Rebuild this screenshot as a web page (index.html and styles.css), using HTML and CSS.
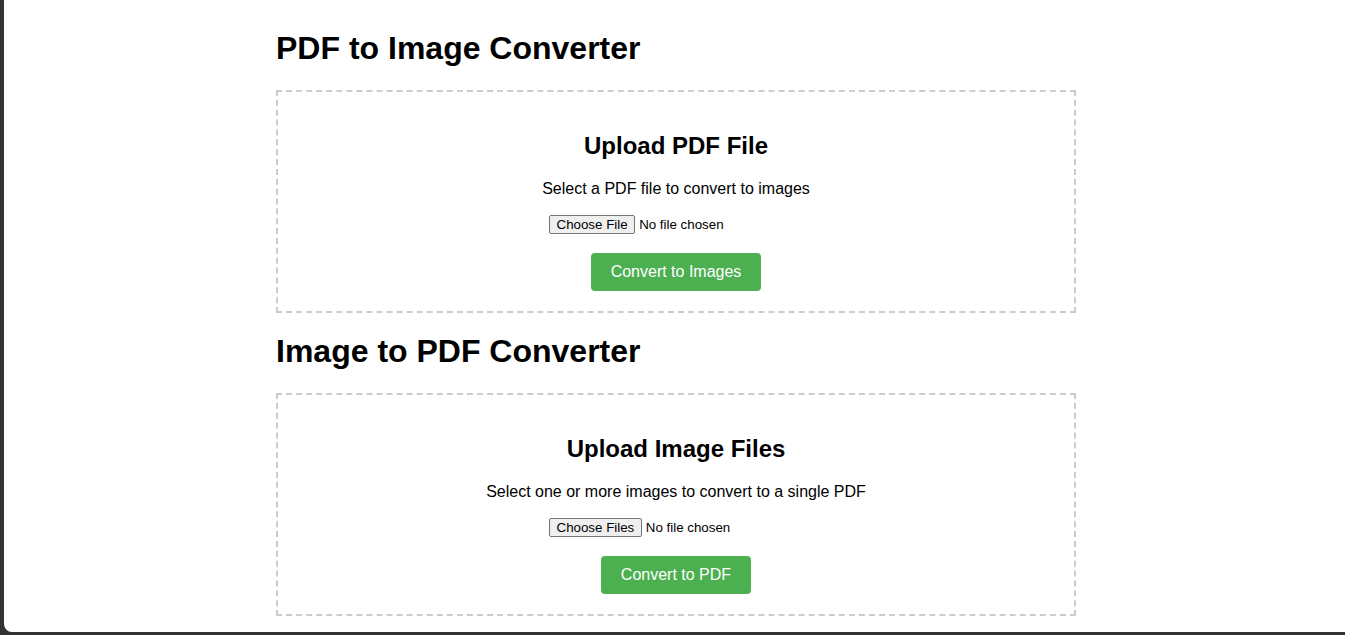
FILE: index.html
```html
<!DOCTYPE html>
<html lang="en">
<head>
<meta charset="utf-8">
<title>PDF Tools</title>
<link rel="stylesheet" href="styles.css">
</head>
<body>
  <div class="window">
    <div class="container">
      <h1>PDF to Image Converter</h1>
      <div class="upload-box">
        <h2>Upload PDF File</h2>
        <p>Select a PDF file to convert to images</p>
        <input type="file" class="file-input" accept=".pdf">
        <button class="convert-btn">Convert to Images</button>
      </div>

      <h1>Image to PDF Converter</h1>
      <div class="upload-box">
        <h2>Upload Image Files</h2>
        <p>Select one or more images to convert to a single PDF</p>
        <input type="file" class="file-input" accept="image/*" multiple>
        <button class="convert-btn">Convert to PDF</button>
      </div>
    </div>
  </div>
</body>
</html>
```
FILE: styles.css
```css
html, body {
  margin: 0;
  height: 100%;
}

body {
  background: #333333;
  font-family: "Liberation Sans", Arial, sans-serif;
  color: #000;
  overflow: hidden;
}

.window {
  margin-left: 4px;
  height: 632px;
  background: #ffffff;
  border-bottom-left-radius: 8px;
  padding: 10px 0 0 3px;
  box-sizing: border-box;
  overflow: hidden;
}

.container {
  width: 800px;
  margin: 0 auto;
}

h1 {
  font-size: 32px;
  font-weight: bold;
  margin: 20px 0 23px;
}

.upload-box {
  border: 2px dashed #cccccc;
  padding: 20px;
  text-align: center;
  box-sizing: border-box;
  width: 100%;
}

.upload-box h2 {
  font-size: 24px;
  font-weight: bold;
  margin: 19.92px 0;
}

.upload-box p {
  font-size: 16px;
  margin: 16px 0;
}

.file-input {
  display: block;
  width: 254px;
  margin: 17px auto 0;
  font-family: "Liberation Sans", Arial, sans-serif;
  font-size: 13.333px;
  text-align: left;
}

.file-input::file-selector-button {
  font-family: "Liberation Sans", Arial, sans-serif;
  font-size: 13.333px;
  color: #000;
  background: #efefef;
  border: 1px solid #767676;
  border-radius: 2px;
  padding: 1px 6.5px;
  margin-right: 4px;
}

.convert-btn {
  display: block;
  margin: 19px auto 0;
  background: #4caf50;
  color: #ffffff;
  border: none;
  border-radius: 4px;
  padding: 10px 20px;
  font-family: "Liberation Sans", Arial, sans-serif;
  font-size: 16px;
  line-height: 18px;
  cursor: pointer;
}
```
